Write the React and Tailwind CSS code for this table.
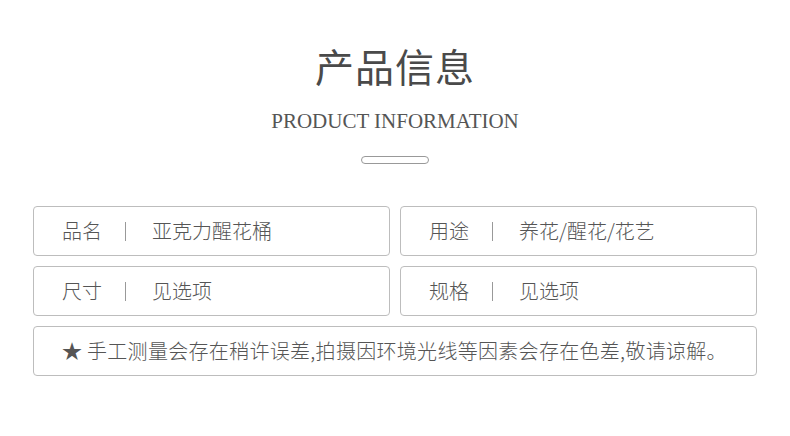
const font = { fontFamily: '"Noto Sans CJK SC", "Noto Sans", sans-serif' };

const Cell = ({ label, value }) => (
  <div className="flex items-center h-[50px] border border-[#bdbdbd] rounded-[4px] pl-[28px] text-[20px] font-light text-[#555]">
    <span className="w-[63px]">{label}</span>
    <span className="w-px h-[19px] bg-[#999]"></span>
    <span className="ml-[26px]">{value}</span>
  </div>
);

export default function App() {
  return (
    <div className="w-[790px] h-[436px] bg-white flex flex-col items-center" style={font}>
      <h1 className="mt-[38px] text-[39px] leading-[54px] text-[#4a4a4a] tracking-[1px]">产品信息</h1>
      <p className="mt-[17px] text-[21px] leading-[24px] text-[#555] font-['Liberation_Serif',serif]">
        PRODUCT INFORMATION
      </p>
      <div className="mt-[23px] w-[68px] h-[8px] rounded-full border border-[#999]"></div>
      <div className="mt-[42px] w-[724px] grid grid-cols-2 gap-x-[10px] gap-y-[10px]">
        <Cell label="品名" value="亚克力醒花桶" />
        <Cell label="用途" value="养花/醒花/花艺" />
        <Cell label="尺寸" value="见选项" />
        <Cell label="规格" value="见选项" />
        <div className="col-span-2 flex items-center h-[50px] border border-[#bdbdbd] rounded-[4px] pl-[28px] text-[20px] font-light text-[#555] tracking-[0.3px]">
          ★ 手工测量会存在稍许误差,拍摄因环境光线等因素会存在色差,敬请谅解。
        </div>
      </div>
    </div>
  );
}
